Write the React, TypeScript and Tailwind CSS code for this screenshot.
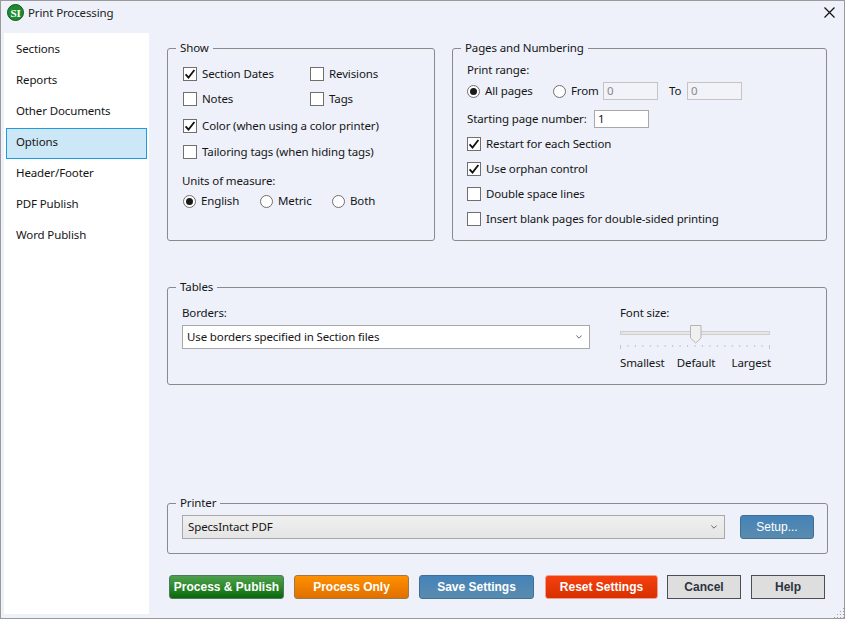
import React from "react";

const Check = ({ on, label }: { on?: boolean; label: string }) => (
  <div className="flex items-center h-[25px] gap-[5px]">
    <span className="w-[14px] h-[14px] shrink-0 bg-white border border-[#6f6f6f] flex items-center justify-center">
      {on && (
        <svg width="12" height="12" viewBox="0 0 12 12">
          <path d="M1.6 6.4 L4.5 9.6 L10.4 2" fill="none" stroke="#111" strokeWidth="1.8" />
        </svg>
      )}
    </span>
    <span className="whitespace-nowrap">{label}</span>
  </div>
);

const Radio = ({ on, label, className }: { on?: boolean; label: string; className?: string }) => (
  <div className={"flex items-center gap-[5px] " + (className ?? "")}>
    <span className="w-[13px] h-[13px] shrink-0 rounded-full bg-white border border-[#6f6f6f] flex items-center justify-center">
      {on && <span className="w-[7px] h-[7px] rounded-full bg-[#1a1a1a]" />}
    </span>
    <span className="whitespace-nowrap">{label}</span>
  </div>
);

const Group = ({ title, className, children }: { title: string; className: string; children: React.ReactNode }) => (
  <fieldset className={"border border-[#8a8a8a] rounded-[3px] " + className}>
    <legend className="ml-[8px] px-[4px] leading-[16px]">{title}</legend>
    {children}
  </fieldset>
);

const Chevron = () => (
  <svg width="6" height="4" viewBox="0 0 6 4">
    <path d="M0.3 0.5 L3 3.2 L5.7 0.5" fill="none" stroke="#666" strokeWidth="1" />
  </svg>
);

const NumBox = ({ value, disabled, className }: { value: string; disabled?: boolean; className?: string }) => (
  <div
    className={
      "w-[55px] h-[18px] flex items-center pl-[3px] border shrink-0 " +
      (disabled ? "bg-[#f1f3f9] border-[#c4c4c4] text-[#8a8a8a] " : "bg-white border-[#a8a8a8] ") +
      (className ?? "")
    }
  >
    {value}
  </div>
);

const btn =
  "h-[24px] rounded-[3px] border flex items-center justify-center text-white font-bold text-[12px] tracking-normal font-['Liberation_Sans',Arial,sans-serif]";

export default function App() {
  const ticks = Array.from({ length: 21 }, (_, i) => i * 7.45 + 0.5);
  return (
    <div className="w-[845px] h-[619px] flex flex-col border border-[#9a9a9a] bg-[#eef1fa] text-[11.5px] tracking-[-0.13px] text-[#151515] font-['Noto_Sans','Open_Sans',sans-serif] overflow-hidden">
      {/* Title bar */}
      <div className="h-[32px] shrink-0 flex items-center pl-[6px] pr-[9px] pb-[9px]">
        <svg width="17" height="17" viewBox="0 0 17 17" className="shrink-0">
          <circle cx="8.5" cy="8.5" r="8" fill="#1f8a30" />
          <circle cx="8.5" cy="8.5" r="8" fill="none" stroke="#0e5a1a" strokeWidth="1" />
          <text x="8.5" y="12.5" textAnchor="middle" fontSize="11" fontWeight="700" fill="#ffffff" fontFamily="Liberation Serif, serif">
            SI
          </text>
        </svg>
        <span className="ml-[4px] text-[#222]">Print Processing</span>
        <svg width="11" height="11" viewBox="0 0 11 11" className="ml-auto">
          <path d="M0.5 0.5 L10.5 10.5 M10.5 0.5 L0.5 10.5" stroke="#111" strokeWidth="1.2" />
        </svg>
      </div>

      <div className="flex flex-1 min-h-0">
        {/* Sidebar */}
        <div className="w-[145px] ml-[3px] mb-[4px] bg-white shrink-0 pt-[2px] px-[2px]">
          {["Sections", "Reports", "Other Documents", "Options", "Header/Footer", "PDF Publish", "Word Publish"].map((s) => (
            <div
              key={s}
              className={
                "h-[31px] flex items-center pl-[9px] pb-[4px] border " +
                (s === "Options" ? "bg-[#cce8f7] border-[#1f9ce0]" : "border-transparent")
              }
            >
              {s}
            </div>
          ))}
        </div>

        {/* Main */}
        <div className="flex-1 flex flex-col pl-[18px] pr-[17px] pt-[7px] relative">
          <div className="flex gap-[17px]">
            <Group title="Show" className="w-[268px] h-[201px]">
              <div className="pl-[15px] pt-[5px]">
                <div className="grid grid-cols-[127px_1fr]">
                  <Check on label="Section Dates" />
                  <Check label="Revisions" />
                  <Check label="Notes" />
                  <Check label="Tags" />
                </div>
                <div className="mt-[2px]">
                  <Check on label="Color (when using a color printer)" />
                </div>
                <div className="mt-[1px]">
                  <Check label="Tailoring tags (when hiding tags)" />
                </div>
                <div className="mt-[9px] -ml-[1px] leading-[16px]">Units of measure:</div>
                <div className="flex mt-[4px] h-[16px]">
                  <Radio on label="English" className="w-[77px]" />
                  <Radio label="Metric" className="w-[72px]" />
                  <Radio label="Both" />
                </div>
              </div>
            </Group>
            <Group title="Pages and Numbering" className="w-[375px] h-[201px]">
              <div className="pl-[14px]">
                <div className="leading-[16px] mt-[6px]">Print range:</div>
                <div className="flex items-center mt-[3px] h-[20px]">
                  <Radio on label="All pages" className="w-[86px]" />
                  <Radio label="From" className="w-[50px]" />
                  <NumBox value="0" disabled />
                  <span className="ml-[11px] w-[18px]">To</span>
                  <NumBox value="0" disabled />
                </div>
                <div className="flex items-center mt-[8px] h-[20px]">
                  <span className="w-[127px] whitespace-nowrap">Starting page number:</span>
                  <NumBox value="1" />
                </div>
                <div className="mt-[2px]">
                  <Check on label="Restart for each Section" />
                  <Check on label="Use orphan control" />
                  <Check label="Double space lines" />
                  <Check label="Insert blank pages for double-sided printing" />
                </div>
              </div>
            </Group>
          </div>

          <Group title="Tables" className="w-[660px] h-[106px] mt-[38px]">
            <div className="flex pl-[14px] pt-[10px]">
              <div className="w-[408px]">
                <div className="leading-[16px]">Borders:</div>
                <div className="mt-[4px] h-[24px] bg-white border border-[#a8a8a8] flex items-center justify-between pl-[4px] pr-[7px]">
                  <span>Use borders specified in Section files</span>
                  <Chevron />
                </div>
              </div>
              <div className="ml-[30px] w-[151px]">
                <div className="leading-[16px]">Font size:</div>
                <div className="relative h-[25px] mt-[4px]">
                  <div className="absolute left-0 right-[1px] top-[6px] h-[4px] bg-[#e6e6e6] border border-[#cfcfcf]" />
                  <svg width="12" height="19" viewBox="0 0 12 19" className="absolute left-[70px] top-0">
                    <path d="M0.5 0.5 H11 V13 L5.75 18 L0.5 13 Z" fill="#f0f0f0" stroke="#b5b5b5" />
                  </svg>
                  <svg width="151" height="5" viewBox="0 0 151 5" className="absolute left-0 top-[20px]">
                    {ticks.map((x) => (
                      <line key={x} x1={x} x2={x} y1="0" y2={x < 1 || x > 149 ? 4 : 2} stroke="#c6c6c6" />
                    ))}
                  </svg>
                </div>
                <div className="flex justify-between mt-[5px] leading-[16px]">
                  <span>Smallest</span>
                  <span className="mr-[4px]">Default</span>
                  <span>Largest</span>
                </div>
              </div>
            </div>
          </Group>

          <div className="flex-1" />

          <Group title="Printer" className="w-[661px] h-[59px] mb-[21px]">
            <div className="flex items-start pl-[14px] pt-[4px]">
              <div className="w-[543px] h-[24px] border border-[#a8a8a8] bg-gradient-to-b from-[#f0f0f0] to-[#e5e5e5] flex items-center justify-between pl-[5px] pr-[7px]">
                <span>SpecsIntact PDF</span>
                <Chevron />
              </div>
              <div className={btn + " !font-normal ml-[15px] w-[74px] bg-gradient-to-b from-[#4483b8] to-[#5a8bae] border-[#3f6f96]"}>
                Setup...
              </div>
            </div>
          </Group>

          <div className="flex pl-[2px] mb-[19px] h-[24px]">
            <div className={btn + " w-[115px] bg-gradient-to-b from-[#4f9f4f] via-[#2a8a2a] to-[#0a660a] border-[#4d7a5a]"}>Process &amp; Publish</div>
            <div className={btn + " w-[115px] ml-[10px] bg-gradient-to-b from-[#ff9000] to-[#e07000] border-[#9a7a4a]"}>Process Only</div>
            <div className={btn + " w-[115px] ml-[10px] bg-gradient-to-b from-[#4483b8] to-[#5a8bae] border-[#3f6f96]"}>Save Settings</div>
            <div className={btn + " w-[113px] ml-[11px] bg-gradient-to-b from-[#f5400f] to-[#d83000] border-[#f0a090]"}>Reset Settings</div>
            <div className={btn + " w-[74px] ml-[9px] !text-[#2b3440] bg-[#dedede] !rounded-none border-[#4a4f55]"}>Cancel</div>
            <div className={btn + " w-[74px] ml-[10px] !text-[#2b3440] bg-[#dedede] !rounded-none border-[#4a4f55]"}>Help</div>
          </div>

          <svg width="12" height="12" viewBox="0 0 12 12" className="absolute right-0 bottom-0">
            {[[10, 2], [10, 5], [7, 5], [10, 8], [7, 8], [4, 8], [10, 11], [7, 11], [4, 11], [1, 11]].map(([x, y]) => (
              <rect key={`${x}-${y}`} x={x} y={y} width="1" height="1" fill="#a0a0a0" />
            ))}
          </svg>
        </div>
      </div>
    </div>
  );
}
